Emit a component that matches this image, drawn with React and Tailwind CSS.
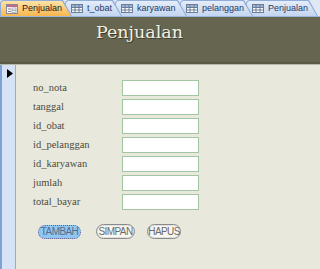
const fields = ["no_nota", "tanggal", "id_obat", "id_pelanggan", "id_karyawan", "jumlah", "total_bayar"];

const tabs = [
  { name: "Penjualan", w: "w-[72px]", z: "z-50", form: true, active: true },
  { name: "t_obat", w: "w-[57px]", z: "z-40" },
  { name: "karyawan", w: "w-[72px]", z: "z-30" },
  { name: "pelanggan", w: "w-[73px]", z: "z-20" },
  { name: "Penjualan", w: "w-[72px]", z: "z-10" },
];

function GridIcon() {
  return (
    <svg width="12" height="9" viewBox="0 0 12 9" className="shrink-0">
      <rect x="0.5" y="0.5" width="11" height="8" fill="#fff" stroke="#6b7d99" />
      <rect x="1" y="1" width="10" height="2" fill="#9fb4d3" />
      <path d="M0.5 3.5H11.5M0.5 6H11.5M4 0.5V8.5M8 0.5V8.5" stroke="#6b7d99" strokeWidth="1" />
    </svg>
  );
}

function FormIcon() {
  return (
    <svg width="12" height="10" viewBox="0 0 12 10" className="shrink-0">
      <rect x="0.5" y="0.5" width="11" height="9" fill="#f4f4f4" stroke="#8a8a9a" />
      <rect x="1" y="1" width="10" height="2" fill="#c66a8a" />
      <rect x="2" y="4.5" width="3" height="1" fill="#8a8a9a" />
      <rect x="6" y="4" width="4" height="2" fill="#fff" stroke="#8a8a9a" strokeWidth="0.6" />
      <rect x="2" y="7" width="3" height="1" fill="#8a8a9a" />
      <rect x="6" y="6.5" width="4" height="2" fill="#fff" stroke="#8a8a9a" strokeWidth="0.6" />
    </svg>
  );
}

export default function App() {
  return (
    <div className="w-[320px] h-[269px] overflow-hidden flex flex-col bg-[#e9e8dc] font-['Liberation_Serif',serif]">
      {/* tab strip */}
      <div className="h-[17px] flex items-end bg-[#dfe8f5] border-b border-[#9ab3d8] font-['Liberation_Sans',sans-serif] text-[9px]">
        {tabs.map((t, i) => (
          <div key={i} className={`relative ${t.z} ${t.w} shrink-0 h-[16px] -mr-[7px] bg-[#8fadd8] rounded-tl-[4px] [clip-path:polygon(0_0,calc(100%-9px)_0,100%_100%,0_100%)]`}>
            <div
              className={`absolute left-[1px] top-[1px] right-0 bottom-0 flex items-center gap-[4px] pl-[5px] rounded-tl-[3px] [clip-path:polygon(0_0,calc(100%-10px)_0,calc(100%-1px)_100%,0_100%)] ${
                t.active
                  ? "bg-gradient-to-b from-[#fde3a8] to-[#f8b64c] text-[#202020]"
                  : "bg-gradient-to-b from-[#e4edf9] to-[#c3d6f0] text-[#1e3a6a]"
              }`}
            >
              {t.form ? <FormIcon /> : <GridIcon />}
              <span className="whitespace-nowrap">{t.name}</span>
            </div>
          </div>
        ))}
      </div>

      {/* header */}
      <div className="h-[45px] bg-[#666650] flex pt-[3px] pl-[96px]">
        <span className="text-[17.5px] leading-[24px] text-[#f2efe2] [text-shadow:1px_1px_0_#3c3c2c] font-['DejaVu_Serif',serif]">
          Penjualan
        </span>
      </div>
      <div className="h-[3px] bg-[#5a5a46] border-b border-[#b8b8a8]" />

      {/* body */}
      <div className="flex-1 flex">
        <div className="w-[16px] bg-[#d5e3f5] border-l-2 border-[#7fa2d6] border-r border-r-[#9aaabf] pt-[4px] pl-[5px]">
          <svg width="6" height="9" viewBox="0 0 6 9">
            <path d="M0 0L6 4.5L0 9Z" fill="#000" />
          </svg>
        </div>
        <div className="flex-1 flex flex-col pl-[17px] pt-[15px]">
          <div className="flex flex-col gap-[3px]">
            {fields.map((f) => (
              <div key={f} className="flex items-center h-[16px]">
                <span className="w-[89px] text-[10.5px] text-[#4c4c3c]">{f}</span>
                <div className="w-[77px] h-[16px] bg-white border border-[#a2c6a2]" />
              </div>
            ))}
          </div>
          <div className="flex items-center mt-[14px] pl-[5px] text-[10px] tracking-[-0.6px] text-[#6a6a6a] font-['Liberation_Sans',sans-serif]">
            <div className="w-[43px] h-[14px] rounded-full bg-[#8ec8f2] border border-dotted border-[#6a5a9a] flex items-center justify-center text-[#5a6a8a]">
              TAMBAH
            </div>
            <div className="ml-[15px] w-[39px] h-[15px] rounded-full bg-[#f7f7f2] border border-[#8a8a8a] shadow-[inset_0_0_0_1px_#e0e0e0] flex items-center justify-center">
              SIMPAN
            </div>
            <div className="ml-[12px] w-[34px] h-[15px] rounded-full bg-[#f7f7f2] border border-[#8a8a8a] shadow-[inset_0_0_0_1px_#e0e0e0] flex items-center justify-center">
              HAPUS
            </div>
          </div>
        </div>
      </div>
    </div>
  );
}
